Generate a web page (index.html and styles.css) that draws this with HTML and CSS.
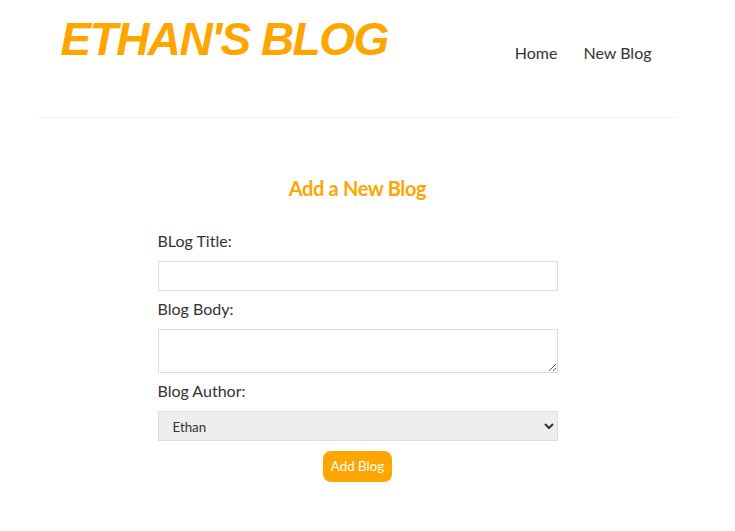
FILE: index.html
```
<!DOCTYPE html>
<html lang="en">
<head>
<meta charset="utf-8">
<title>Ethan's Blog</title>
<link rel="stylesheet" href="styles.css">
</head>
<body>
<div class="app">
  <nav class="navbar">
    <h1 class="brand">ETHAN'S BLOG</h1>
    <div class="links">
      <a href="#">Home</a>
      <a href="#">New Blog</a>
    </div>
  </nav>
  <div class="content">
    <div class="create">
      <h2>Add a New Blog</h2>
      <form>
        <label>BLog Title:</label>
        <input type="text">
        <label>Blog Body:</label>
        <textarea></textarea>
        <label>Blog Author:</label>
        <select>
          <option>Ethan</option>
          <option>Mario</option>
        </select>
        <button type="button">Add Blog</button>
      </form>
    </div>
  </div>
</div>
</body>
</html>
```
FILE: styles.css
```
* { margin: 0; }
body {
  margin: 0;
  font-family: Lato, "Open Sans", sans-serif;
  color: #333;
  background: #fff;
}
.app {
  padding-right: 20px;
}
.navbar {
  max-width: 600px;
  margin: 0 auto;
  padding: 12px 20px 51px;
  display: flex;
  align-items: flex-start;
  border-bottom: 1px solid #f2f2f2;
}
.brand {
  font-family: "Liberation Sans", Arial, sans-serif;
  font-style: italic;
  font-weight: bold;
  font-size: 46px;
  letter-spacing: -1.55px;
  color: #ffa500;
  margin-left: 3px;
}
.links {
  margin-left: auto;
  margin-top: 31px;
}
.links a {
  margin-left: 10px;
  padding: 6px;
  text-decoration: none;
  color: #333;
  font-size: 16px;
}
.content {
  max-width: 600px;
  margin: 0 auto;
  padding: 58px 20px 20px;
}
.create {
  max-width: 400px;
  margin: 0 auto;
  text-align: center;
}
.create h2 {
  font-size: 20px;
  font-weight: bold;
  letter-spacing: -0.35px;
  color: #ffa500;
  margin-bottom: 33px;
}
.create label {
  display: block;
  text-align: left;
  font-size: 16px;
  line-height: 16px;
  padding-bottom: 2px;
}
.create input,
.create textarea,
.create select {
  width: 100%;
  padding: 6px 10px;
  margin: 10px 0;
  border: 1px solid #ddd;
  box-sizing: border-box;
  display: block;
  font-family: Lato, sans-serif;
  font-size: 13.33px;
}
.create input {
  height: 30px;
}
.create textarea {
  height: 44px;
}
.create select {
  height: 30px;
  background: #eee;
  color: #333;
}
.create button {
  background: #ffa500;
  color: #fff;
  border: 0;
  padding: 8px;
  border-radius: 8px;
  font-family: Lato, sans-serif;
  font-size: 13.33px;
  line-height: 15px;
  cursor: pointer;
}
```
